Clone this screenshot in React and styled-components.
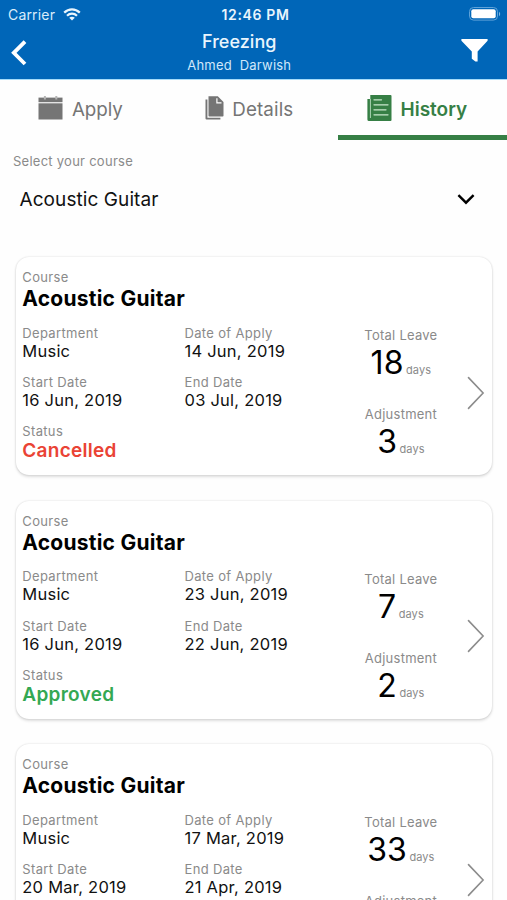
import React from "react";
import styled, { createGlobalStyle } from "styled-components";

const GlobalStyle = createGlobalStyle`
  * { box-sizing: border-box; }
  html, body { margin: 0; height: 100%; overflow: hidden; background: #fff; }
  body { font-family: Inter, "Liberation Sans", sans-serif; color: #111; }
  svg { display: block; flex: none; }
`;

const Screen = styled.div`
  display: flex;
  flex-direction: column;
  width: 100%;
  height: 900px;
  overflow: hidden;
  background: #fefefe;
`;

const Header = styled.header`
  flex: none;
  height: 80px;
  background: #0066b8;
  border-bottom: 1px solid #a5dcfa;
  color: #fff;
`;

const StatusBar = styled.div`
  display: grid;
  grid-template-columns: 1fr auto 1fr;
  align-items: center;
  height: 28px;
  padding: 0 6px 0 10px;
  font-size: 14px;
`;

const Carrier = styled.div`
  display: flex;
  align-items: center;
  gap: 8px;
  margin-left: -2px;
  letter-spacing: 0.17px;
  color: #d9ecfb;
`;

const Clock = styled.div`
  font-weight: 600;
  letter-spacing: 0.65px;
  color: #e9f5fd;
`;

const BatterySlot = styled.div`
  justify-self: end;
`;

const NavBar = styled.div`
  display: grid;
  grid-template-columns: 1fr auto 1fr;
  height: 51px;
  padding: 0 19px 0 11px;
`;

const NavIcon = styled.div`
  justify-self: ${(p) => (p.$end ? "end" : "start")};
  padding-top: ${(p) => p.$top}px;
`;

const Titles = styled.div`
  text-align: center;
  padding-top: 4px;
  margin: 0 6px 0 -14.5px;
`;

const Title = styled.div`
  font-size: 18px;
  font-weight: 500;
  line-height: 20px;
  letter-spacing: 0.05px;
  color: #e9f5fd;
`;

const Subtitle = styled.div`
  font-size: 13px;
  line-height: 16px;
  margin-top: 5px;
  letter-spacing: 0.22px;
  white-space: pre;
  color: #d0e8fa;
`;

const Tabs = styled.nav`
  flex: none;
  display: grid;
  grid-template-columns: repeat(3, 1fr);
  height: 60px;
`;

const Tab = styled.div`
  display: flex;
  align-items: center;
  padding-left: ${(p) => p.$inset}px;
  gap: ${(p) => p.$gap}px;
  font-size: ${(p) => (p.$active ? 19 : 18.8)}px;
  font-weight: ${(p) => (p.$active ? 600 : 400)};
  letter-spacing: ${(p) => p.$tracking || 0}px;
  color: ${(p) => (p.$active ? "#367f45" : "#757575")};
  border-bottom: 5px solid ${(p) => (p.$active ? "#367f45" : "transparent")};
`;

const TabLabel = styled.span`
  margin-top: 3px;
`;

const Picker = styled.section`
  flex: none;
  height: 117.4px;
  padding: 12px 32px 0 13px;
`;

const PickerLabel = styled.div`
  font-size: 13px;
  line-height: 18px;
  letter-spacing: 0.26px;
  color: #8a8a8a;
`;

const PickerValue = styled.div`
  display: flex;
  align-items: center;
  justify-content: space-between;
  height: 26px;
  margin-top: 16px;
  padding-left: 6.5px;
  font-size: 19px;
  letter-spacing: 0.08px;
`;

const CardList = styled.main`
  flex: none;
  display: flex;
  flex-direction: column;
  gap: 25.5px;
  padding: 0 15px 0 15.5px;
`;

const Card = styled.article`
  display: grid;
  grid-template-columns: 312.6px 132px 1fr;
  height: 218px;
  padding-left: 6.8px;
  border-radius: 13px;
  background: #fff;
  box-shadow: 0 0 2px rgba(0, 0, 0, 0.16), 0 2px 3px rgba(0, 0, 0, 0.12);
`;

const Details = styled.div`
  padding-top: 11px;
`;

const Label = styled.div`
  font-size: 13px;
  line-height: 18px;
  letter-spacing: 0.34px;
  color: #8a8a8a;
`;

const CourseName = styled.h2`
  margin: 0 0 12.5px;
  font-size: 21px;
  font-weight: 700;
  line-height: 25px;
  letter-spacing: 0.24px;
  color: #000;
`;

const Fields = styled.div`
  display: grid;
  grid-template-columns: 162.2px 1fr;
  row-gap: 13.3px;
`;

const Value = styled.div`
  font-size: 16.5px;
  line-height: 18px;
  letter-spacing: 0.24px;
`;

const Status = styled.div`
  font-size: 19px;
  font-weight: 600;
  line-height: 21px;
  letter-spacing: 0.28px;
  color: ${(p) => (p.$approved ? "#34a853" : "#ea4335")};
`;

const Totals = styled.div`
  display: flex;
  flex-direction: column;
  align-items: center;
  gap: 24px;
  padding-top: 69px;
`;

const Total = styled.div`
  display: flex;
  flex-direction: column;
  align-items: center;
`;

const TotalLabel = styled(Label)`
  letter-spacing: 0.25px;
`;

const Amount = styled.div`
  display: flex;
  align-items: baseline;
  gap: 2.6px;
  height: 36px;
  margin-top: 1px;
  font-size: 32px;
  line-height: 36px;
  color: #000;
`;

const Unit = styled.span`
  font-size: 11px;
  letter-spacing: 0.1px;
  color: #8a8a8a;
`;

const OpenSlot = styled.div`
  padding-top: 118.6px;
`;

const WifiIcon = () => (
  <svg width="18" height="13" viewBox="0 0 18 13" fill="none" stroke="#e9f5fd" strokeWidth="2.2">
    <path d="M1.2 4.6C5.7 .2 12.3 .2 16.8 4.6" />
    <path d="M4 7.8c2.9-2.8 7.1-2.8 10 0" />
    <path d="M9 12.4 6.2 9.7c1.6-1.4 4-1.4 5.6 0z" fill="#e9f5fd" stroke="none" />
  </svg>
);

const BatteryIcon = () => (
  <svg width="33" height="14" viewBox="0 0 33 14">
    <rect x="1.5" y=".5" width="28" height="12.6" rx="4" fill="none" stroke="#5fa2d8" />
    <rect x="3.3" y="2.3" width="24.4" height="9" rx="2" fill="#fff" />
    <path d="M31 4.8c1.6.7 1.6 3.7 0 4.4z" fill="#7fb6e2" />
  </svg>
);

const BackIcon = () => (
  <svg width="16" height="26" viewBox="0 0 16 26" fill="none" stroke="#fff" strokeWidth="3.8">
    <path d="M14 1.6 2.8 12.8 14 24" />
  </svg>
);

const FilterIcon = () => (
  <svg width="27" height="23" viewBox="0 0 27 23" fill="#fff">
    <path d="M.4 0h26.2v1.8L16.6 12.4V22.4h-2.2L10.8 19.8V12.4L.4 1.8z" />
  </svg>
);

const CalendarIcon = () => (
  <svg width="25" height="24" viewBox="0 0 25 24" fill="#757575">
    <path d="M.5 1.6H24.5v4.6H.5z" />
    <path d="M5.9 0h2v3.6h-2zM17.3 0h2v3.6h-2z" fill="#b4b4b4" />
    <path d="M.5 7.3h24v16.2H.5z" />
  </svg>
);

const FilesIcon = () => (
  <svg width="19" height="24" viewBox="0 0 19 24" fill="#757575">
    <path d="M.5 3.4h1.9v18.4h13v1.8H1.6A1.1 1.1 0 0 1 .5 22.5z" />
    <path d="M3.5.2h9.3l5.7 5.9v13.7a.8.8 0 0 1-.8.8H4.3a.8.8 0 0 1-.8-.8z" />
    <path d="M11.9 2.2v4.6h4.6" fill="none" stroke="#fff" strokeWidth="1.2" />
  </svg>
);

const HistoryIcon = () => (
  <svg width="25" height="26" viewBox="0 0 25 26">
    <path d="M3.3 0h20.2a1 1 0 0 1 1 1v24a1 1 0 0 1-1 1H2a1.6 1.6 0 0 1-1.6-1.6V4h2.9z" fill="#367f45" />
    <path d="M3.4 4v19" stroke="#b9dcbf" strokeWidth=".9" />
    <path d="M7 4.8h7.5M7 9.8h14M7 14.8h12M7 19.8h14" stroke="#c9e8cd" strokeWidth="1.3" strokeLinecap="round" />
  </svg>
);

const DownIcon = () => (
  <svg width="18" height="11" viewBox="0 0 18 11" fill="none" stroke="#000" strokeWidth="2.4">
    <path d="M1.4 1.1 9 8.7l7.6-7.6" />
  </svg>
);

const OpenIcon = () => (
  <svg width="18" height="34" viewBox="0 0 18 34" fill="none" stroke="#8c8c8c" strokeWidth="1.6">
    <path d="M1.5 1.6 16.1 17 1.5 32.4" strokeLinecap="round" />
  </svg>
);

const records = [
  { apply: "14 Jun, 2019", start: "16 Jun, 2019", end: "03 Jul, 2019", status: "Cancelled", total: 18, adjustment: 3 },
  { apply: "23 Jun, 2019", start: "16 Jun, 2019", end: "22 Jun, 2019", status: "Approved", total: 7, adjustment: 2 },
  { apply: "17 Mar, 2019", start: "20 Mar, 2019", end: "21 Apr, 2019", status: "Approved", total: 33, adjustment: 3 },
];

const Field = ({ label, children }) => (
  <div>
    <Label>{label}</Label>
    {children}
  </div>
);

const DayCount = ({ label, days }) => (
  <Total>
    <TotalLabel>{label}</TotalLabel>
    <Amount>
      {days}
      <Unit>days</Unit>
    </Amount>
  </Total>
);

const HistoryCard = ({ record }) => (
  <Card>
    <Details>
      <Label>Course</Label>
      <CourseName>Acoustic Guitar</CourseName>
      <Fields>
        <Field label="Department"><Value>Music</Value></Field>
        <Field label="Date of Apply"><Value>{record.apply}</Value></Field>
        <Field label="Start Date"><Value>{record.start}</Value></Field>
        <Field label="End Date"><Value>{record.end}</Value></Field>
        <Field label="Status">
          <Status $approved={record.status === "Approved"}>{record.status}</Status>
        </Field>
      </Fields>
    </Details>
    <Totals>
      <DayCount label="Total Leave" days={record.total} />
      <DayCount label="Adjustment" days={record.adjustment} />
    </Totals>
    <OpenSlot><OpenIcon /></OpenSlot>
  </Card>
);

export default function App() {
  return (
    <Screen>
      <GlobalStyle />
      <Header>
        <StatusBar>
          <Carrier>Carrier <WifiIcon /></Carrier>
          <Clock>12:46 PM</Clock>
          <BatterySlot><BatteryIcon /></BatterySlot>
        </StatusBar>
        <NavBar>
          <NavIcon $top={12}><BackIcon /></NavIcon>
          <Titles>
            <Title>Freezing</Title>
            <Subtitle>{"Ahmed  Darwish"}</Subtitle>
          </Titles>
          <NavIcon $end $top={11}><FilterIcon /></NavIcon>
        </NavBar>
      </Header>
      <Tabs>
        <Tab $inset={38} $gap={9} $tracking={-0.1}><CalendarIcon /><TabLabel>Apply</TabLabel></Tab>
        <Tab $inset={36} $gap={8.3} $tracking={0.1}><FilesIcon /><TabLabel>Details</TabLabel></Tab>
        <Tab $inset={29} $gap={8.5} $active><HistoryIcon /><TabLabel>History</TabLabel></Tab>
      </Tabs>
      <Picker>
        <PickerLabel>Select your course</PickerLabel>
        <PickerValue>Acoustic Guitar <DownIcon /></PickerValue>
      </Picker>
      <CardList>
        {records.map((record) => <HistoryCard key={record.apply} record={record} />)}
      </CardList>
    </Screen>
  );
}
